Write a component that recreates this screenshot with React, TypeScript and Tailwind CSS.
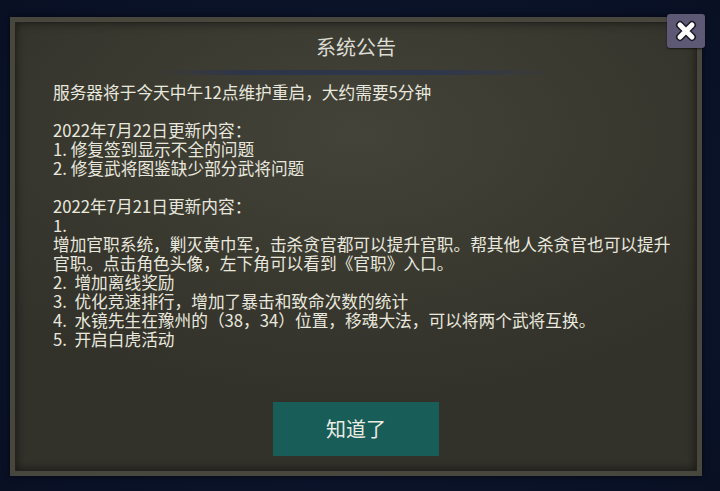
import * as React from "react";

const notes: string[] = [
  "服务器将于今天中午12点维护重启，大约需要5分钟",
  "",
  "2022年7月22日更新内容：",
  "1. 修复签到显示不全的问题",
  "2. 修复武将图鉴缺少部分武将问题",
  "",
  "2022年7月21日更新内容：",
  "1.",
  "增加官职系统，剿灭黄巾军，击杀贪官都可以提升官职。帮其他人杀贪官也可以提升官职。点击角色头像，左下角可以看到《官职》入口。",
  "2.  增加离线奖励",
  "3.  优化竞速排行，增加了暴击和致命次数的统计",
  "4.  水镜先生在豫州的（38，34）位置，移魂大法，可以将两个武将互换。",
  "5.  开启白虎活动",
];

function CloseIcon() {
  // chunky white cross with a dark outline
  return (
    <svg width="24" height="24" viewBox="0 0 24 24">
      <g strokeLinecap="round">
        <path d="M6 6 L18 18 M18 6 L6 18" stroke="#1c1a26" strokeWidth="8" />
        <path d="M6 6 L18 18 M18 6 L6 18" stroke="#ffffff" strokeWidth="5" />
      </g>
    </svg>
  );
}

export default function App() {
  return (
    <div
      className="relative w-[720px] h-[491px] overflow-hidden bg-[#0c1530] bg-[radial-gradient(ellipse_at_center,#13203d_0%,#0b1329_70%,#091024_100%)] pt-[17px] pl-[10px]"
      style={{ fontFamily: '"Noto Sans CJK SC", "Noto Sans", sans-serif' }}
    >
      {/* panel frame */}
      <div className="w-[692px] h-[459px] border-[5px] border-[#48473e] bg-[#24231e] p-px shadow-[0_0_6px_rgba(0,0,0,0.6)]">
        <div className="flex h-full flex-col bg-[#37362e] bg-[radial-gradient(ellipse_70%_60%_at_50%_25%,#44433a_0%,#3a3930_55%,#32312a_100%)] shadow-[inset_0_0_10px_rgba(0,0,0,0.55)]">
          <h1 className="pt-[10px] text-center text-[20px] leading-[28px] text-[#dcdcd2]">
            系统公告
          </h1>
          <div className="mx-auto mt-[9px] h-[5px] w-[400px] bg-[linear-gradient(90deg,rgba(44,52,72,0)_0%,#2d3549_22%,#2f374b_72%,rgba(44,52,72,0)_100%)]" />
          <div className="flex-1 pl-[37px] pr-[24px] pt-[8px] text-[16.7px] leading-[19px] text-[#e8e8de]">
            {notes.map((line, i) => (
              <p key={i} className="min-h-[19px] whitespace-pre-wrap">
                {line}
              </p>
            ))}
          </div>
          <div className="flex justify-center pb-[14px]">
            <button className="h-[54px] w-[166px] bg-[#185d57] text-[20px] text-[#ecece4]">
              知道了
            </button>
          </div>
        </div>
      </div>

      <button className="absolute left-[667px] top-[14px] flex h-[34px] w-[38px] items-center justify-center rounded-[3px] bg-[#5d5874] shadow-[0_1px_2px_rgba(0,0,0,0.6)]">
        <CloseIcon />
      </button>
    </div>
  );
}
